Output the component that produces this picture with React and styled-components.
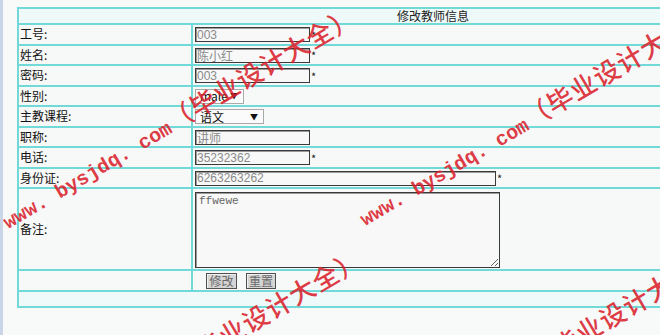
import styled, { createGlobalStyle } from "styled-components";

const GlobalStyle = createGlobalStyle`
  html, body {
    margin: 0;
    padding: 0;
    overflow: hidden;
    background: #f8f9f9;
  }
  body {
    font-family: "Noto Sans CJK SC", "Liberation Sans", sans-serif;
    font-size: 12px;
    color: #111;
  }
`;

const Page = styled.div`
  position: relative;
  box-sizing: border-box;
  width: 660px;
  height: 335px;
  overflow: hidden;
  border-left: 3px solid #cad6e8;
  padding: 6.5px 0 0 14px;
`;

const Table = styled.table`
  border-collapse: separate;
  border-spacing: 0;
  table-layout: fixed;
  width: 832px;
  border-top: 2px solid #72d9d9;
  border-left: 2px solid #72d9d9;
  background: #f7f8f8;
`;

const Col = styled.col`
  width: ${(p) => p.$w}px;
`;

const Cell = styled.td`
  box-sizing: border-box;
  height: ${(p) => p.$h || 20.5}px;
  padding: 0;
  border-right: 2px solid #72d9d9;
  border-bottom: 2px solid #72d9d9;
  vertical-align: middle;
  line-height: 14px;
`;

const HeaderCell = styled(Cell)`
  text-align: center;
  background: #eef9f9;
  color: #222;
`;

const LabelCell = styled(Cell)`
  padding-left: 1px;
`;

const FieldCell = styled(Cell)`
  padding-left: 2px;
  white-space: nowrap;
`;

const TextInput = styled.input`
  box-sizing: border-box;
  width: ${(p) => p.$w}px;
  height: 15px;
  margin: 0;
  padding: 0 1px;
  border: 1px solid #3a3a3a;
  box-shadow: inset 1px 1px 0 #9a9a9a;
  background: #f8f8f8;
  font-family: "Liberation Sans", "Noto Sans CJK SC", sans-serif;
  font-size: 12px;
  color: #8a8a8a;
  vertical-align: middle;
  outline: none;
`;

const Star = styled.span`
  display: inline-block;
  margin-left: 1px;
  font-size: 11px;
  line-height: 10px;
  vertical-align: middle;
  color: #222;
`;

const Dropdown = styled.span`
  box-sizing: border-box;
  display: inline-flex;
  align-items: center;
  justify-content: space-between;
  width: ${(p) => p.$w}px;
  height: 15px;
  padding: 0 5px 0 4px;
  border: 1px solid #a9a9a9;
  background: #fbfbfb;
  font-size: 12px;
  color: #111;
  vertical-align: middle;
`;

const Arrow = styled.span`
  font-size: 8px;
  line-height: 8px;
  color: #111;
`;

const Area = styled.textarea`
  box-sizing: border-box;
  display: block;
  width: 305px;
  height: 76px;
  margin: 1px 0 0;
  padding: 2px 3px;
  border: 1px solid #3a3a3a;
  box-shadow: inset 1px 1px 0 #9a9a9a;
  background: #f8f8f8;
  font-family: "Liberation Mono", monospace;
  font-size: 11px;
  color: #666;
  outline: none;
`;

const Button = styled.button`
  box-sizing: border-box;
  width: ${(p) => p.$w}px;
  height: 16px;
  margin: 0 0 0 ${(p) => p.$ml}px;
  padding: 0;
  border: 1px solid #505050;
  box-shadow: inset 1px 1px 0 #f0f0f0;
  background: #d5d5d5;
  font-family: "Noto Sans CJK SC", sans-serif;
  font-size: 12px;
  line-height: 13px;
  color: #6a6a6a;
  vertical-align: middle;
`;

const Watermark = styled.div`
  position: absolute;
  left: ${(p) => p.$x}px;
  top: ${(p) => p.$y - 26}px;
  height: 26px;
  white-space: nowrap;
  transform-origin: 0 100%;
  transform: rotate(-30.5deg);
  color: rgba(218, 34, 44, 0.88);
  font-family: "Liberation Mono", monospace;
  font-weight: bold;
  font-size: 20px;
  line-height: 26px;
  pointer-events: none;
`;

const WmCjk = styled.span`
  font-family: "Noto Sans CJK SC", sans-serif;
  font-size: 26px;
  font-weight: 500;
  letter-spacing: 1px;
`;

const fields = [
  { label: "工号:", value: "003", w: 115, star: true },
  { label: "姓名:", value: "陈小红", w: 115, star: true },
  { label: "密码:", value: "003", w: 115, star: true },
];

const fields2 = [
  { label: "职称:", value: "讲师", w: 115 },
  { label: "电话:", value: "35232362", w: 115, star: true },
  { label: "身份证:", value: "6263263262", w: 301, star: true },
];

const marks = [
  { x: 6, y: 231 },
  { x: 363, y: 228 },
  { x: 12, y: 474 },
  { x: 369, y: 471 },
];

const FieldRow = ({ f }) => (
  <tr>
    <LabelCell>{f.label}</LabelCell>
    <FieldCell>
      <TextInput $w={f.w} defaultValue={f.value} />
      {f.star && <Star>*</Star>}
    </FieldCell>
  </tr>
);

export default function App() {
  return (
    <>
      <GlobalStyle />
      <Page>
        <Table>
          <colgroup>
            <Col $w={174} />
            <Col $w={656} />
          </colgroup>
          <tbody>
            <tr>
              <HeaderCell colSpan={2} $h={16.5}>
                修改教师信息
              </HeaderCell>
            </tr>
            {fields.map((f) => (
              <FieldRow key={f.label} f={f} />
            ))}
            <tr>
              <LabelCell>性别:</LabelCell>
              <FieldCell>
                <Dropdown $w={49}>
                  male<Arrow>▼</Arrow>
                </Dropdown>
              </FieldCell>
            </tr>
            <tr>
              <LabelCell>主教课程:</LabelCell>
              <FieldCell>
                <Dropdown $w={69}>
                  语文<Arrow>▼</Arrow>
                </Dropdown>
              </FieldCell>
            </tr>
            {fields2.map((f) => (
              <FieldRow key={f.label} f={f} />
            ))}
            <tr>
              <LabelCell $h={82}>备注:</LabelCell>
              <FieldCell $h={82}>
                <Area defaultValue="ffwewe" />
              </FieldCell>
            </tr>
            <tr>
              <LabelCell />
              <FieldCell>
                <Button $w={31} $ml={11}>修改</Button>
                <Button $w={30} $ml={9}>重置</Button>
              </FieldCell>
            </tr>
            <tr>
              <HeaderCell colSpan={2} $h={16.5} />
            </tr>
          </tbody>
        </Table>
        {marks.map((m, i) => (
          <Watermark key={i} $x={m.x} $y={m.y}>
            www. bysjdq. com<WmCjk>（毕业设计大全）</WmCjk>
          </Watermark>
        ))}
      </Page>
    </>
  );
}
